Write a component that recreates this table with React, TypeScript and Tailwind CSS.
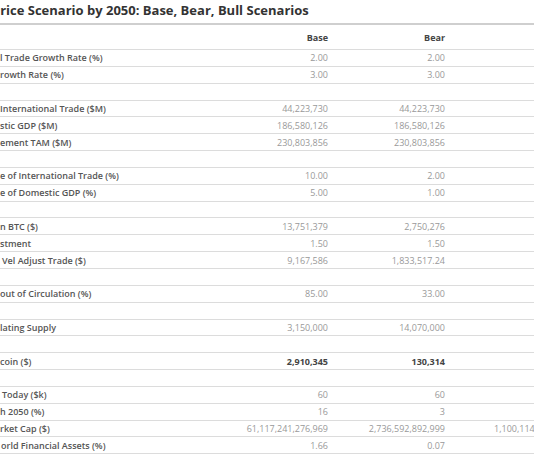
import React from 'react';

interface Row {
  label?: string;
  indent?: string;
  base?: string;
  bear?: string;
  bull?: string;
  total?: boolean;
}

const rows: Row[] = [
  { label: 'l Trade Growth Rate (%)', base: '2.00', bear: '2.00', bull: '2.00' },
  { label: 'rowth Rate (%)', base: '3.00', bear: '3.00', bull: '3.00' },
  {},
  { label: 'International Trade ($M)', base: '44,223,730', bear: '44,223,730', bull: '44,223,730' },
  { label: 'stic GDP ($M)', base: '186,580,126', bear: '186,580,126', bull: '186,580,126' },
  { label: 'ement TAM ($M)', base: '230,803,856', bear: '230,803,856', bull: '230,803,856' },
  {},
  { label: 'e of International Trade (%)', base: '10.00', bear: '2.00', bull: '50.00' },
  { label: 'e of Domestic GDP (%)', base: '5.00', bear: '1.00', bull: '25.00' },
  {},
  { label: 'n BTC ($)', base: '13,751,379', bear: '2,750,276', bull: '68,756,896' },
  { label: 'stment', base: '1.50', bear: '1.50', bull: '1.50' },
  { label: 'Vel Adjust Trade ($)', indent: 'pl-[2px]', base: '9,167,586', bear: '1,833,517.24', bull: '45,837,931' },
  {},
  { label: 'out of Circulation (%)', base: '85.00', bear: '33.00', bull: '95.00' },
  {},
  { label: 'lating Supply', base: '3,150,000', bear: '14,070,000', bull: '1,050,000' },
  {},
  { label: 'coin ($)', base: '2,910,345', bear: '130,314', bull: '52,380,120', total: true },
  {},
  { label: 'Today ($k)', indent: 'pl-[2px]', base: '60', bear: '60', bull: '60' },
  { label: 'h 2050 (%)', base: '16', bear: '3', bull: '29' },
  { label: 'rket Cap ($)', base: '61,117,241,276,969', bear: '2,736,592,892,999', bull: '1,100,114,528,173,844' },
  { label: 'orld Financial Assets (%)', indent: 'pl-[1px]', base: '1.66', bear: '0.07', bull: '29.80' },
];

const gridCols = 'grid grid-cols-[211px_117px_117px_143px] w-[588px]';

export default function App() {
  return (
    <div
      className="w-[534px] h-[462px] overflow-hidden bg-white"
      style={{ fontFamily: '"Open Sans", "Liberation Sans", sans-serif' }}
    >
      <div className="w-[588px] border-b-2 border-[#cfcfcf] pb-[3px]">
        <h2 className="ml-[-8px] text-[13px] leading-[20px] font-bold text-[#333] whitespace-nowrap">
          Price Scenario by 2050: Base, Bear, Bull Scenarios
        </h2>
      </div>

      <div className={`${gridCols} h-[25px] items-center border-b border-[#dcdcdc] pt-[2px] text-[9px] font-bold text-[#444]`}>
        <div />
        <div className="text-right">Base</div>
        <div className="text-right">Bear</div>
        <div className="text-right">Bull</div>
      </div>

      {rows.map((r, i) => (
        <div
          key={i}
          className={`${gridCols} h-[16.85px] items-center border-b border-[#dcdcdc] pt-[1px] text-[9px] leading-[12px] whitespace-nowrap`}
        >
          <div className={`font-semibold text-[#555] ${r.indent ?? ''}`}>{r.label}</div>
          <div className={`text-right ${r.total ? 'font-bold text-[#444]' : 'text-[#999]'}`}>{r.base}</div>
          <div className={`text-right ${r.total ? 'font-bold text-[#444]' : 'text-[#999]'}`}>{r.bear}</div>
          <div className={`text-right ${r.total ? 'font-bold text-[#444]' : 'text-[#999]'}`}>{r.bull}</div>
        </div>
      ))}
    </div>
  );
}
